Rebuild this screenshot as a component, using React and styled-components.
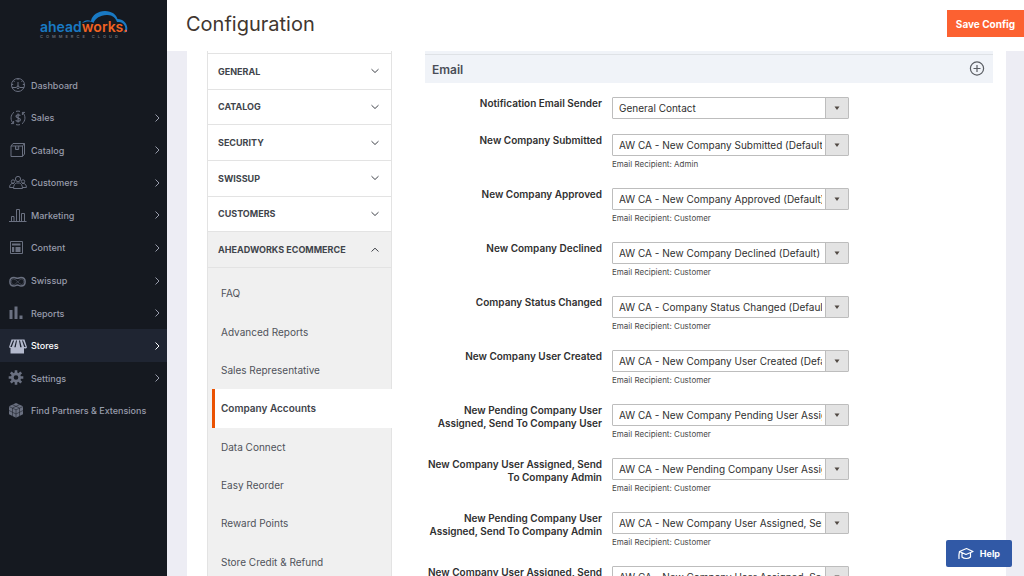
import React from "react";
import styled, { createGlobalStyle, css } from "styled-components";

const GlobalStyle = createGlobalStyle`
  *, *::before, *::after { box-sizing: border-box; }
  body { margin: 0; background: #ededf4; }
  body, button, select { font-family: Inter, "Open Sans", "Liberation Sans", sans-serif; }
`;

const Page = styled.div`
  display: flex;
  height: 100vh;
  overflow: hidden;
  color: #41444b;
`;

const Sidebar = styled.aside`
  flex: 0 0 167px;
  background: #151920;
`;

const LogoLink = styled.a`
  display: block;
  height: 69px;
  padding: 8px 0 0 36px;
  svg { display: block; }
`;

const Menu = styled.nav`
  display: grid;
  grid-auto-rows: 1fr;
  height: 358px;
`;

const MenuLink = styled.a`
  display: flex;
  align-items: center;
  gap: 4px;
  padding: 0 5px 0 9px;
  font-size: 9px;
  font-weight: 500;
  white-space: nowrap;
  text-decoration: none;
  color: ${(p) => (p.$active ? "#ffffff" : "#989cab")};
  background: ${(p) => (p.$active ? "#1f2532" : "transparent")};
  svg:first-child { color: ${(p) => (p.$active ? "#b4bacd" : "#6a7080")}; }
  svg { flex: none; }
`;

const MenuText = styled.span`
  flex: 1;
`;

const Main = styled.main`
  flex: 1;
  min-width: 0;
  display: flex;
  flex-direction: column;
`;

const Header = styled.header`
  flex: 0 0 51px;
  display: flex;
  align-items: center;
  justify-content: space-between;
  padding: 0 0 4px 19px;
  background: #fff;
`;

const Title = styled.h1`
  margin: 0;
  font-size: 20px;
  font-weight: 400;
  color: #41362f;
`;

const SaveButton = styled.button`
  height: 27px;
  padding: 0 9px;
  border: 0;
  background: #fc6131;
  color: #fff;
  font-size: 10px;
  font-weight: 700;
  white-space: nowrap;
`;

const Content = styled.div`
  flex: 1;
  min-height: 0;
  overflow-y: auto;
  scrollbar-width: none;
  display: flex;
  align-items: flex-start;
  gap: 33px;
  margin: 0 18px 0 20px;
  padding: 0 13px 0 20px;
  background: #fff;
`;

const Tabs = styled.nav`
  flex: 0 0 185px;
  padding-top: 2px;
  border: 1px solid #e3e3e3;
  border-top: 0;
`;

const TabGroups = styled.div`
  display: grid;
  grid-auto-rows: 1fr;
  height: 215px;
  border-bottom: 1px solid #e3e3e3;
`;

const GroupButton = styled.button`
  display: flex;
  align-items: center;
  justify-content: space-between;
  padding: 0 11px 0 10px;
  border: 0;
  border-top: 1px solid #e3e3e3;
  background: ${(p) => (p.$open ? "#f0f0f0" : "#fff")};
  color: #41444b;
  font-size: 9px;
  font-weight: 700;
  text-align: left;
`;

const SubList = styled.div`
  padding-top: 6px;
  background: #f0f0f0;
`;

const SubItems = styled.div`
  display: grid;
  grid-auto-rows: 1fr;
  height: 307px;
`;

const SubLink = styled.a`
  display: flex;
  align-items: center;
  padding-left: 13px;
  font-size: 10px;
  font-weight: 400;
  color: #4f525a;
  text-decoration: none;
  ${(p) => p.$active && css`
    margin: 0 -1px 0 4px;
    padding-left: 6px;
    border-left: 3px solid #eb5202;
    background: #fff;
    color: #41444b;
    font-weight: 600;
  `}
`;

const Section = styled.section`
  flex: 1;
  min-width: 0;
  border-top: 3px solid #f0f3f8;
`;

const SectionHead = styled.div`
  display: flex;
  align-items: center;
  justify-content: space-between;
  height: 29px;
  padding: 0 8px 0 7px;
  border-top: 1px solid #dfe2e6;
  background: #f0f3f8;
  color: #4a4e57;
`;

const SectionTitle = styled.h2`
  margin: 0;
  font-size: 12px;
  font-weight: 600;
`;

const ExpandButton = styled.button`
  display: flex;
  padding: 0;
  border: 0;
  background: none;
  color: #5a5d63;
`;

const Form = styled.form`
  padding-top: 14px;
`;

const Field = styled.div`
  display: grid;
  grid-template-columns: 177px 237px;
  column-gap: 10px;
  align-items: start;
  min-height: ${(p) => (p.$plain ? "37px" : "54px")};
`;

const Label = styled.label`
  font-size: 10px;
  line-height: 13px;
  font-weight: 600;
  text-align: right;
  white-space: pre-line;
  color: #303030;
`;

const SelectBox = styled.div`
  position: relative;
`;

const Select = styled.select`
  display: block;
  appearance: none;
  width: 100%;
  height: 22px;
  padding: 0 26px 0 6px;
  border: 1px solid #bdbdbd;
  border-radius: 1px;
  background: #fff;
  color: #303030;
  font-size: 10px;
`;

const SelectArrow = styled.span`
  position: absolute;
  top: 1px;
  right: 1px;
  bottom: 1px;
  width: 23px;
  display: grid;
  place-items: center;
  border-left: 1px solid #bdbdbd;
  background: #e3e3e3;
  pointer-events: none;
`;

const Note = styled.p`
  margin: 2px 0 0;
  font-size: 8px;
  line-height: 13px;
  color: #4a4a4a;
`;

const HelpButton = styled.button`
  position: fixed;
  right: 12px;
  bottom: 9px;
  display: flex;
  align-items: center;
  gap: 6px;
  height: 27px;
  padding: 0 12px 0 12px;
  border: 0;
  border-radius: 2px;
  background: #3159a6;
  color: #fff;
  font-size: 9px;
  font-weight: 700;
`;

const iconShapes = {
  dashboard: (
    <>
      <circle cx="9" cy="9" r="6.5" />
      <path d="M9 6v5M3 11.5h4M11 11.5h4M9 2.5v1.5M4.5 4.8l1 1M13.5 4.8l-1 1M2.8 8.5h1.4M13.8 8.5h1.4" />
      <circle cx="9" cy="11.3" r="1.3" />
    </>
  ),
  sales: (
    <>
      <path d="M5 3.200C1.200 6 1.200 11.500 4.300 14.300M4.600 12v2.600H2M13 14.800c3.800-2.800 3.800-8.300.7-11.100M13.400 6V3.400H16M7 2.400q2-.7 4 0M7 15.600q2 .7 4 0" />
      <path d="M11.300 6.600C10.600 5.400 7 5.300 7 7.300s4.400 1.300 4.400 3.400-3.900 2.100-4.700.5M9.100 4.500v9" strokeWidth="1.2" />
    </>
  ),
  catalog: (
    <path d="M2 5h11.500v10.500H2zM2 5l2-2.500h11.500L13.500 5M15.500 2.500V13l-2 2.500M6.500 5v3.500h3.200V5M7.500 7h1" />
  ),
  customers: (
    <>
      <circle cx="9" cy="5" r="2.600" />
      <path d="M4.500 14.500c0-3.500 1.500-5 3-5.500h3c1.500.5 3 2 3 5.500z" />
      <circle cx="4" cy="7.500" r="1.700" />
      <circle cx="14" cy="7.500" r="1.700" />
      <path d="M4.500 13.500H.6c0-2.500 1-3.500 2.400-4h2M13.500 13.500h3.900c0-2.500-1-3.500-2.400-4h-2" />
    </>
  ),
  marketing: (
    <path d="M0 15.500h17.500M2.500 15v-4.500h2.500V15M7.500 15V3.500h3v11.500M12.500 15V7.500h3v7.500" />
  ),
  content: (
    <>
      <path d="M1.500 2.500h12v12h-12z" />
      <path d="M3 4.500h8.500v2H3zM3 8h2.200v5H3zM6.500 8h5v5h-5z" fill="currentColor" stroke="none" />
    </>
  ),
  swissup: (
    <>
      <path d="M5 5.500C-.5 5.500-.5 14 5 14c1.500 0 2.500-1 3.500-1 1 0 2 1 3.500 1 5.500 0 5.500-8.500 0-8.500-1.500 0-2.500.8-3.500.8s-2-.8-3.500-.8z" strokeWidth="1.500" />
      <path d="M4.500 7C1.500 7.500 1.500 12 4.500 12.500c3 .2 5.500-5.300 8-5.500 3 .5 3 5 0 5.500C10 12.500 7.500 7 4.500 7z" strokeWidth=".8" opacity=".6" />
    </>
  ),
  reports: (
    <path d="M.5 6h3v9h-3zM5.500 2.500h3V15h-3zM10.500 11.500h3V15h-3z" fill="currentColor" stroke="none" />
  ),
  stores: (
    <path d="M2.500 2.500h13L18 10.300c-.5 1.500-2.300 1.600-3 .6v5.600H1.500V11C.9 11 .3 10.800 0 10.300zM4 3.500L1.300 10h1.500l2.400-6.500zM7 3.500l-1.700 6.700h1.400L8 3.500zM10 3.500l1.200 6.700h1.500L11 3.500zM13 3.500l2.200 6.500h1.500L14 3.500z" fill="currentColor" fillRule="evenodd" stroke="none" />
  ),
  settings: (
    <>
      <circle cx="7" cy="8.500" r="3.700" strokeWidth="2.800" />
      <path d="M7 1.200v3M7 12.800v3M-.3 8.500h3M11.300 8.500h3M1.800 3.300L4 5.500M10 11.500l2.200 2.200M12.200 3.300L10 5.500M4 11.500l-2.200 2.200" strokeWidth="2.600" />
    </>
  ),
  partners: (
    <>
      <path d="M7 1l7 3.200v8L7 15.800 0 12.200v-8z" fill="currentColor" stroke="none" />
      <path d="M0 4.500l7 3.300 7-3.300M7 7.800v8M3.500 6v8M10.500 6v8M0 8.500l7 3.500 7-3.500M3.500 2.700l7 3.300M10.500 2.700l-7 3.300" stroke="#151920" strokeWidth=".5" />
    </>
  ),
};

const Icon = ({ name }) => (
  <svg width="18" height="18" viewBox="0 0 18 18" fill="none" stroke="currentColor" strokeWidth="1" overflow="visible" aria-hidden="true">
    {iconShapes[name]}
  </svg>
);

const chevronPaths = {
  right: "M3.500 1.500L7 5 3.500 8.500",
  down: "M1.500 3.200L5 6.500 8.500 3.200",
  up: "M1.500 6.500L5 3.200 8.500 6.500",
};

const Chevron = ({ direction }) => (
  <svg width="10" height="10" viewBox="0 0 10 10" fill="none" stroke="currentColor" strokeWidth="1" aria-hidden="true">
    <path d={chevronPaths[direction]} />
  </svg>
);

const Logo = () => (
  <svg width="100" height="34" viewBox="0 0 100 34" role="img" aria-label="aheadworks commerce cloud">
    <path d="M46 15.300C48 12 52 11.500 55 13 56 7 62 3.200 69 3c7 .1 11 3.500 12.500 8 5.500.2 9.500 4 9.800 9 .1 2.200-.7 4-2.300 4.500l-2-.5c2-.8 2.500-2.500 2.200-4.500-.5-3.700-3.500-5.700-8.200-5.500C79.500 9.500 76 6.500 70.500 7 64 7.500 59.500 10 57.500 15c-3-2-7-2-11.500.3z" fill="#1979c3" />
    <text x="4" y="24" fontFamily="Inter, sans-serif" fontSize="14" fontWeight="600" fill="#1979c3">
      ahead<tspan fill="#f26322">works.</tspan>
    </text>
    <text x="4" y="30" fontFamily="Inter, sans-serif" fontSize="4" fontWeight="600" letterSpacing="3" fill="#666b76">
      COMMERCE CLOUD
    </text>
  </svg>
);

const menu = [
  ["dashboard", "Dashboard"],
  ["sales", "Sales", true],
  ["catalog", "Catalog", true],
  ["customers", "Customers", true],
  ["marketing", "Marketing", true],
  ["content", "Content", true],
  ["swissup", "Swissup", true],
  ["reports", "Reports", true],
  ["stores", "Stores", true],
  ["settings", "Settings", true],
  ["partners", "Find Partners & Extensions"],
];

const groups = ["GENERAL", "CATALOG", "SECURITY", "SWISSUP", "CUSTOMERS", "AHEADWORKS ECOMMERCE"];

const subItems = [
  "FAQ",
  "Advanced Reports",
  "Sales Representative",
  "Company Accounts",
  "Data Connect",
  "Easy Reorder",
  "Reward Points",
  "Store Credit & Refund",
];

const fields = [
  ["Notification Email Sender", "General Contact"],
  ["New Company Submitted", "AW CA - New Company Submitted (Default)", "Admin"],
  ["New Company Approved", "AW CA - New Company Approved (Default)", "Customer"],
  ["New Company Declined", "AW CA - New Company Declined (Default)", "Customer"],
  ["Company Status Changed", "AW CA - Company Status Changed (Default)", "Customer"],
  ["New Company User Created", "AW CA - New Company User Created (Default)", "Customer"],
  ["New Pending Company User\nAssigned, Send To Company User", "AW CA - New Company Pending User Assigned", "Customer"],
  ["New Company User Assigned, Send\nTo Company Admin", "AW CA - New Pending Company User Assigned", "Customer"],
  ["New Pending Company User\nAssigned, Send To Company Admin", "AW CA - New Company User Assigned, Send To", "Customer"],
  ["New Company User Assigned, Send\nTo Company User", "AW CA - New Company User Assigned, Send To", "Customer"],
];

export default function App() {
  return (
    <Page>
      <GlobalStyle />
      <Sidebar>
        <LogoLink href="#"><Logo /></LogoLink>
        <Menu aria-label="Main menu">
          {menu.map(([icon, text, nested]) => (
            <MenuLink key={text} href="#" $active={text === "Stores"}>
              <Icon name={icon} />
              <MenuText>{text}</MenuText>
              {nested && <Chevron direction="right" />}
            </MenuLink>
          ))}
        </Menu>
      </Sidebar>
      <Main>
        <Header>
          <Title>Configuration</Title>
          <SaveButton type="button">Save Config</SaveButton>
        </Header>
        <Content>
          <Tabs aria-label="Configuration sections">
            <TabGroups>
              {groups.map((g, i) => {
                const open = i === groups.length - 1;
                return (
                  <GroupButton key={g} type="button" $open={open} aria-expanded={open}>
                    {g}
                    <Chevron direction={open ? "up" : "down"} />
                  </GroupButton>
                );
              })}
            </TabGroups>
            <SubList>
              <SubItems>
                {subItems.map((s) => (
                  <SubLink key={s} href="#" $active={s === "Company Accounts"}>{s}</SubLink>
                ))}
              </SubItems>
            </SubList>
          </Tabs>
          <Section>
            <SectionHead>
              <SectionTitle>Email</SectionTitle>
              <ExpandButton type="button" aria-label="Toggle Email section">
                <svg width="16" height="16" viewBox="0 0 16 16" fill="none" stroke="currentColor" strokeWidth="1.200">
                  <circle cx="8" cy="7.500" r="6.600" />
                  <path d="M8 4v7M4.500 7.500h7" />
                </svg>
              </ExpandButton>
            </SectionHead>
            <Form>
              {fields.map(([label, value, recipient], i) => (
                <Field key={label} $plain={!recipient}>
                  <Label htmlFor={`field-${i}`}>{label}</Label>
                  <div>
                    <SelectBox>
                      <Select id={`field-${i}`} defaultValue={value}>
                        <option>{value}</option>
                      </Select>
                      <SelectArrow>
                        <svg width="6" height="5" viewBox="0 0 6 5" aria-hidden="true">
                          <path d="M.5.5h5L3 4z" fill="#514943" />
                        </svg>
                      </SelectArrow>
                    </SelectBox>
                    {recipient && <Note>Email Recipient: {recipient}</Note>}
                  </div>
                </Field>
              ))}
            </Form>
          </Section>
        </Content>
      </Main>
      <HelpButton type="button">
        <svg width="16" height="13" viewBox="0 0 16 13" fill="none" stroke="currentColor" strokeWidth="1.200" strokeLinejoin="round" strokeLinecap="round" aria-hidden="true">
          <path d="M1.500 4.500L8.500 1.500 15 4.500 8 7.500zM4 6v4c2 2 6.500 2 8.500 0V6M1.500 4.500C.9 7 .8 9 1 11.500" />
        </svg>
        Help
      </HelpButton>
    </Page>
  );
}
